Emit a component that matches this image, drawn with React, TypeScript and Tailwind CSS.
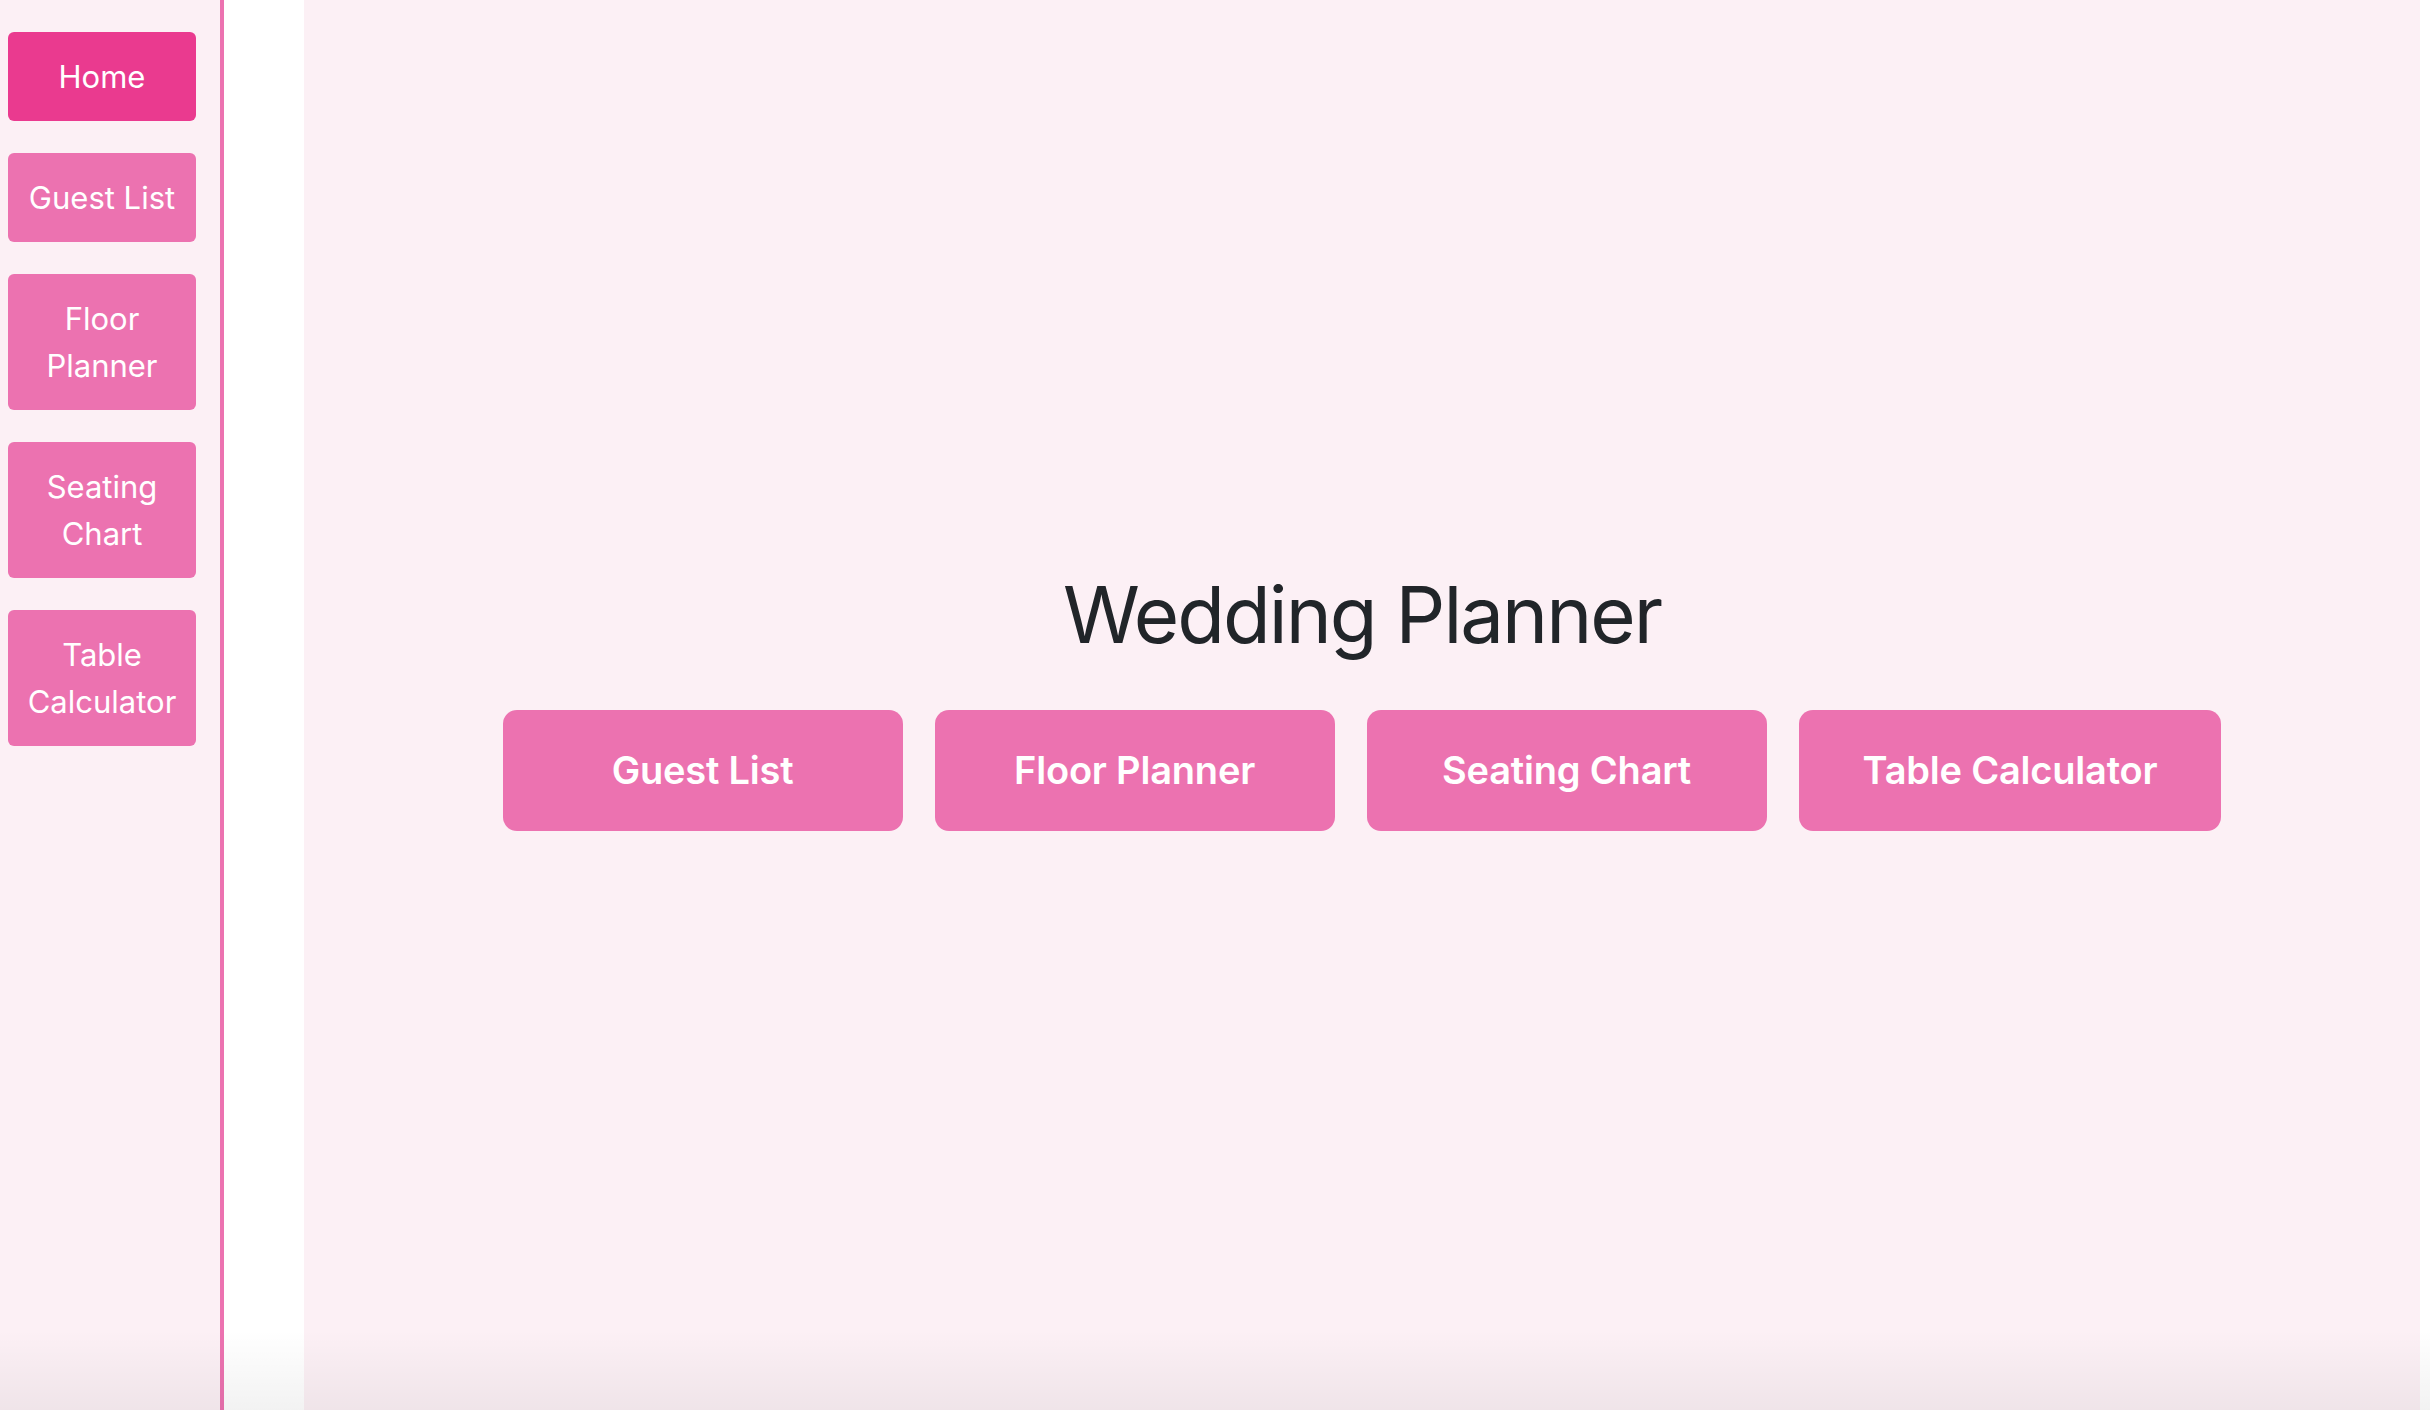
import React, { useState } from 'react'

const pages = ['Home', 'Guest List', 'Floor Planner', 'Seating Chart', 'Table Calculator']

const App: React.FC = () => {
  const [active, setActive] = useState('Home')

  return (
    <div className="relative flex h-[1410px] w-full overflow-hidden bg-white font-['Inter','Noto_Sans',sans-serif]">
      {/* Sidebar */}
      <aside className="flex w-[224px] shrink-0 flex-col gap-8 border-r-4 border-[#ec72b0] bg-[#fcf0f5] pl-2 pt-8">
        {pages.map((p) => (
          <button
            key={p}
            onClick={() => setActive(p)}
            className={`w-[188px] rounded-[6px] px-3 py-[21px] text-center text-[31px] leading-[47px] text-white ${
              active === p ? 'bg-[#ea3a8f]' : 'bg-[#ec72b0]'
            }`}
          >
            {p}
          </button>
        ))}
      </aside>

      {/* Gap */}
      <div className="w-[80px] shrink-0 bg-white" />

      {/* Main */}
      <main className="flex flex-1 flex-col items-center justify-center bg-[#fcf0f5] pb-[12px]">
        <h1 className="mb-12 text-[78px] font-normal leading-[94px] tracking-[-2px] text-[#212529]">
          Wedding Planner
        </h1>
        <div className="flex gap-8">
          {pages.slice(1).map((p) => (
            <button
              key={p}
              onClick={() => setActive(p)}
              className="min-w-[400px] rounded-[14px] bg-[#ec72b0] px-16 py-8 text-[38px] font-semibold leading-[57px] tracking-[-0.2px] text-white"
            >
              {p}
            </button>
          ))}
        </div>
      </main>

      <div className="w-[10px] shrink-0 bg-white" />

      {/* bottom shade */}
      <div className="pointer-events-none absolute bottom-0 left-0 h-[80px] w-full bg-gradient-to-b from-transparent to-black/5" />
    </div>
  )
}

export default App
